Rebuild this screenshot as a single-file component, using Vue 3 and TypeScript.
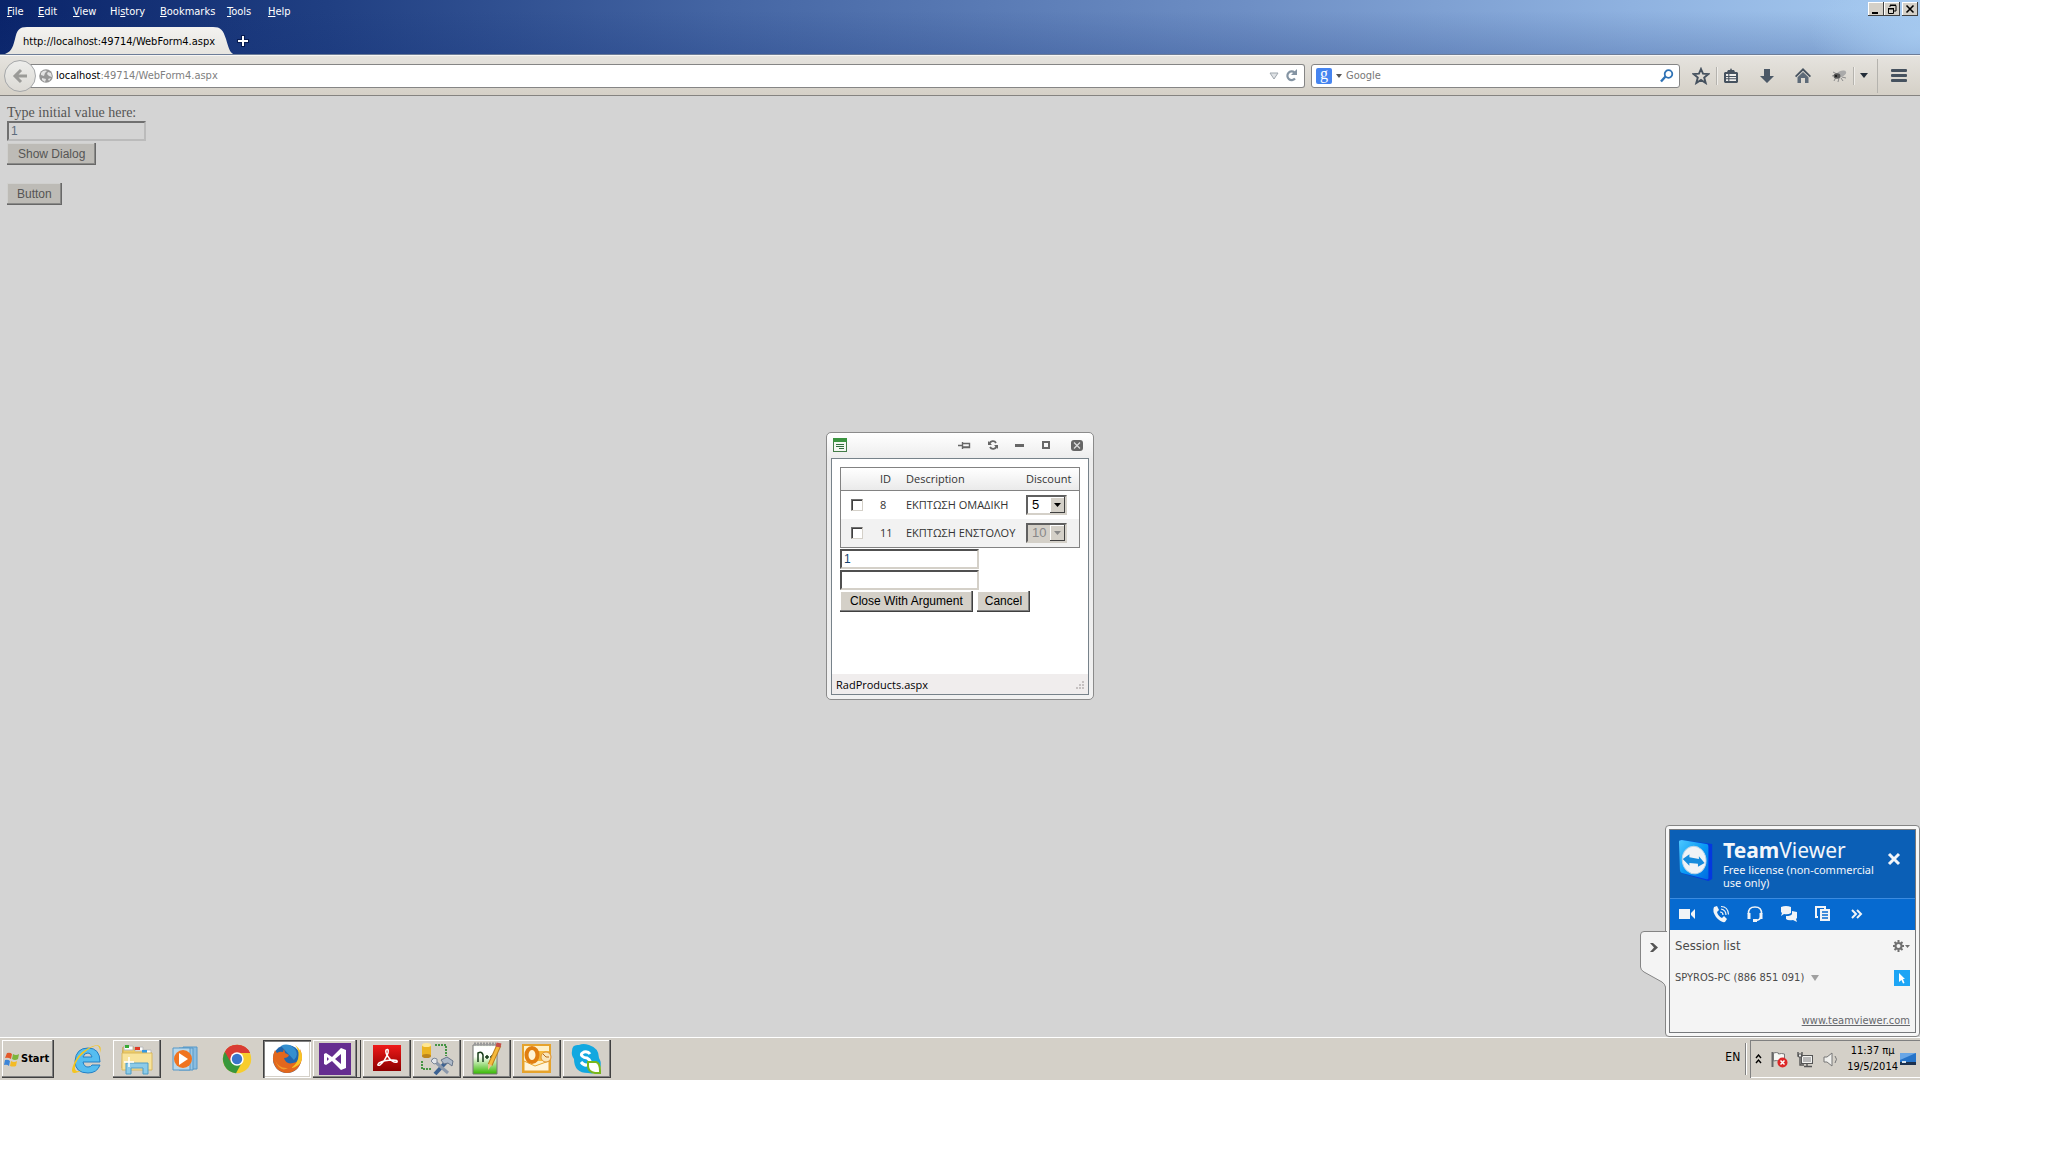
<script setup lang="ts">
import { ref } from 'vue'

interface Row { id: number; description: string; discount: string; disabled: boolean }

const menus = [
  { pre: '', key: 'F', post: 'ile', w: 31 },
  { pre: '', key: 'E', post: 'dit', w: 35 },
  { pre: '', key: 'V', post: 'iew', w: 37 },
  { pre: 'Hi', key: 's', post: 'tory', w: 50 },
  { pre: '', key: 'B', post: 'ookmarks', w: 67 },
  { pre: '', key: 'T', post: 'ools', w: 41 },
  { pre: '', key: 'H', post: 'elp', w: 30 },
]
const rows = ref<Row[]>([
  { id: 8, description: 'ΕΚΠΤΩΣΗ ΟΜΑΔΙΚΗ', discount: '5', disabled: false },
  { id: 11, description: 'ΕΚΠΤΩΣΗ ΕΝΣΤΟΛΟΥ', discount: '10', disabled: true },
])
const initialValue = ref('1')
const argument = ref('1')
const extra = ref('')
const query = ref('')
</script>

<template>
  <div class="desktop">
    <header class="titlebar">
      <div class="menu-line">
        <nav class="menus">
          <button v-for="m in menus" :key="m.post" type="button" :style="{ width: m.w + 'px' }">{{ m.pre }}<u>{{ m.key }}</u>{{ m.post }}</button>
        </nav>
        <div class="win-buttons">
          <button type="button" aria-label="Minimize"><svg width="14" height="12" viewBox="0 0 14 12"><rect x="3" y="9" width="6" height="2" /></svg></button>
          <button type="button" aria-label="Restore"><svg width="14" height="12" viewBox="0 0 14 12" fill="none" stroke="#000"><path d="M5 4V2.5h6V8H9M5 2h6M3.5 6v4.500h5V6zM3 5.500h6" /></svg></button>
          <button type="button" aria-label="Close" class="close"><svg width="14" height="12" viewBox="0 0 14 12" stroke="#000" stroke-width="1.600"><path d="M3.500 2.500l7 7M10.500 2.500l-7 7" /></svg></button>
        </div>
      </div>
      <div class="tab-line">
        <div class="tab">
          <svg width="236" height="28" viewBox="0 0 236 28" aria-hidden="true">
            <defs><linearGradient id="tabFill" x1="0" y1="0" x2="0" y2="1"><stop offset="0" stop-color="#f3f2f0" /><stop offset="1" stop-color="#e6e4df" /></linearGradient></defs>
            <path d="M0 28C12 27 13 19 15 12C17 3 19 0 27 0H213C221 0 223 3 226 12C229 22 230 27 236 28Z" fill="url(#tabFill)" />
          </svg>
          <span>http://localhost:49714/WebForm4.aspx</span>
        </div>
        <button type="button" class="new-tab" aria-label="New tab">
          <svg width="14" height="14" viewBox="0 0 14 14"><path d="M5 1h4v4h4v4H9v4H5V9H1V5h4z" fill="#061a50" /><path d="M6 2h2v4h4v2H8v4H6V8H2V6h4z" fill="#fff" /></svg>
        </button>
      </div>
    </header>

    <div class="toolbar">
      <div class="address">
        <button type="button" class="back" aria-label="Back">
          <svg width="16" height="16" viewBox="0 0 16 16" fill="none" stroke="#9b9b98" stroke-width="3"><path d="M15 8H4M9 2L3 8l6 6" /></svg>
        </button>
        <div class="url">
          <svg width="14" height="14" viewBox="0 0 14 14"><circle cx="7" cy="7" r="6.800" fill="#969696" /><path d="M2 4c2-3 5-3 6-2L6 4 5 7 2 6zM9 3l3 1 1 4-3-1-2-2zM3 9l4 1-1 3-3-2zM9 10l3-1-2 3z" fill="#e3e3e3" /></svg>
          <span class="url-text"><b>localhost</b>:49714/WebForm4.aspx</span>
          <svg width="10" height="8" viewBox="0 0 10 8"><path d="M1 1h8L5 7z" fill="#dfe2e5" stroke="#9fa7ae" /></svg>
          <button type="button" class="plain" aria-label="Reload">
            <svg width="13" height="13" viewBox="0 0 13 13"><path d="M10 9.500A4.300 4.300 0 1 1 9.500 3.500" fill="none" stroke="#8494a3" stroke-width="2.200" /><path d="M12 0v6H6z" fill="#8494a3" /></svg>
          </button>
        </div>
      </div>
      <div class="search">
        <span class="g-logo">g</span>
        <svg width="6" height="4" viewBox="0 0 6 4"><path d="M0 0h6L3 4z" fill="#555" /></svg>
        <input v-model="query" type="text" placeholder="Google" aria-label="Search" />
        <svg width="14" height="14" viewBox="0 0 14 14" fill="none" stroke="#2f72b5"><circle cx="8.500" cy="5" r="3.800" stroke-width="1.800" /><path d="M5.500 7.500L1 12.500" stroke-width="2.400" /></svg>
      </div>
      <div class="tools">
        <div class="tool-group">
          <button type="button" class="plain" aria-label="Bookmark"><svg width="18" height="18" viewBox="0 0 18 18"><path d="M9 2l2 4.700 5.500.3-4.300 3.500 1.500 5.500L9 13l-4.700 3 1.500-5.500L1.500 7l5.500-.3z" fill="none" stroke="#46525f" stroke-width="1.900" /></svg></button>
          <i class="sep" />
          <button type="button" class="plain" aria-label="Bookmarks list"><svg width="16" height="16" viewBox="0 0 16 16"><path d="M5 2h2l1-2 1 2h2l1 2h2l1 1v9l-1 1H2l-1-1V5l1-1h2z" fill="#46525f" /><path d="M3 6h10v7H3z" fill="#f0efec" /><path d="M3 8.500h10M3 10.800h10M5.800 6v7" stroke="#46525f" stroke-width="1.100" /></svg></button>
        </div>
        <button type="button" class="plain" aria-label="Downloads"><svg width="16" height="16" viewBox="0 0 16 16"><path d="M5 1h6v7h4l-7 7-7-7h4z" fill="#4c5967" /></svg></button>
        <button type="button" class="plain" aria-label="Home"><svg width="16" height="16" viewBox="0 0 16 16"><path d="M8 0l8 8-1.200 1.200L8 2.700 1.200 9.200 0 8z" fill="#46525f" /><path d="M8 4l5.500 5.200V15H10v-5H6v5H2.500V9.200z" fill="#5d6a78" /></svg></button>
        <div class="tool-group">
          <button type="button" class="plain" aria-label="Firebug"><svg width="16" height="14" viewBox="0 0 16 14"><path d="M1 7l4-1M2 3l4 2M3 12l2-4M7 13l1-4M12 12l-2-3M15 9l-4-1" stroke="#8b8b8b" /><ellipse cx="10" cy="5" rx="5.500" ry="3" transform="rotate(-25 10 5)" fill="#aaa" /><ellipse cx="6" cy="7" rx="3.400" ry="2.800" fill="#555" /><circle cx="5" cy="7" r="1" fill="#111" /></svg></button>
          <i class="sep" />
          <button type="button" class="plain" aria-label="More"><svg width="8" height="5" viewBox="0 0 8 5"><path d="M0 0h8L4 5z" fill="#222c38" /></svg></button>
        </div>
      </div>
      <div class="app-menu">
        <button type="button" class="plain" aria-label="Menu"><svg width="16" height="14" viewBox="0 0 16 14" fill="#46525f"><rect width="16" height="3" rx="1" /><rect y="5" width="16" height="3" rx="1" /><rect y="10" width="16" height="3" rx="1" /></svg></button>
      </div>
    </div>

    <main class="page">
      <form class="webform" @submit.prevent>
        <label for="initial">Type initial value here:</label>
        <input id="initial" v-model="initialValue" class="classic" type="text" />
        <button type="button" class="classic-btn first">Show Dialog</button>
        <button type="button" class="classic-btn second">Button</button>
      </form>

      <section class="dialog" role="dialog" aria-label="RadProducts.aspx">
        <div class="dialog-title">
          <svg class="app" width="14" height="14" viewBox="0 0 14 14"><rect x=".5" y=".5" width="13" height="13" fill="#f3f7f1" stroke="#447c48" /><rect width="14" height="4" fill="#3b9440" /><path d="M3 6.500h8M3 8.500h8M6 10.500h5" stroke="#326e3d" /></svg>
          <span class="grow" />
          <button type="button" class="plain" aria-label="Pin"><svg width="13" height="9" viewBox="0 0 13 9"><path d="M0 4.500h4M4.500 1v7M5 2.500h6.500v4H5M5 6h6" stroke="#666" stroke-width="1.400" fill="none" /></svg></button>
          <button type="button" class="plain" aria-label="Reload"><svg width="10" height="10" viewBox="0 0 10 10" fill="none" stroke="#666" stroke-width="1.800"><path d="M8 3A3.500 3.500 0 0 0 1.500 4M2 7a3.500 3.500 0 0 0 6.500-1" /><path d="M0 1v4h4zM10 9V5H6z" fill="#666" stroke="none" /></svg></button>
          <button type="button" class="plain" aria-label="Minimize"><svg width="10" height="10" viewBox="0 0 10 10"><rect y="4" width="9" height="3" fill="#666" /></svg></button>
          <button type="button" class="plain" aria-label="Maximize"><svg width="9" height="9" viewBox="0 0 9 9"><rect x="1" y="1" width="6" height="6" fill="none" stroke="#666" stroke-width="2" /></svg></button>
          <button type="button" class="plain close" aria-label="Close"><svg width="12" height="11" viewBox="0 0 12 11"><rect width="12" height="11" rx="3" fill="#666" /><path d="M3 2.500l6 6M9 2.500l-6 6" stroke="#ddd" stroke-width="1.200" /></svg></button>
        </div>
        <div class="dialog-body">
          <div class="dialog-content">
            <table>
              <colgroup><col class="c1" /><col class="c2" /><col class="c3" /><col /></colgroup>
              <thead><tr><th /><th>ID</th><th>Description</th><th>Discount</th></tr></thead>
              <tbody>
                <tr v-for="r in rows" :key="r.id">
                  <td><input type="checkbox" :aria-label="'Select ' + r.id" /></td>
                  <td>{{ r.id }}</td>
                  <td>{{ r.description }}</td>
                  <td>
                    <span class="drop" :class="{ off: r.disabled }">
                      <select v-model="r.discount" :disabled="r.disabled" :aria-label="'Discount ' + r.id"><option>5</option><option>10</option></select>
                      <span class="arrow"><svg width="7" height="4" viewBox="0 0 7 4"><path d="M0 0h7L3.500 4z" fill="currentColor" /></svg></span>
                    </span>
                  </td>
                </tr>
              </tbody>
            </table>
            <input v-model="argument" class="classic bright" type="text" aria-label="Argument" />
            <input v-model="extra" class="classic bright" type="text" aria-label="Value" />
            <div class="actions">
              <button type="button" class="classic-btn bright">Close With Argument</button>
              <button type="button" class="classic-btn bright narrow">Cancel</button>
            </div>
          </div>
          <div class="status">
            <span>RadProducts.aspx</span>
            <svg width="8" height="8" viewBox="0 0 8 8" fill="#c6c1c1"><path d="M6 0h2v2H6zM3 3h2v2H3zM6 3h2v2H6zM0 6h2v2H0zM3 6h2v2H3zM6 6h2v2H6z" /></svg>
          </div>
        </div>
      </section>

      <aside class="tv">
        <button type="button" class="handle" aria-label="Collapse">
          <svg width="27" height="56" viewBox="0 0 27 56"><path d="M27 .5H4Q.5.500.5 4V36Q.5 39 4 41L22 51Q25 53 25.500 56H27z" fill="#f4f4f4" /><path d="M27 .5H4Q.5.500.5 4V36Q.5 39 4 41L22 51Q25 53 25.500 56" fill="none" stroke="#858585" /><path d="M10 12l4 4.500-4 4.500h3l5-4.500-5-4.500z" fill="#555" /></svg>
        </button>
        <div class="tv-inner">
          <div class="tv-head">
            <svg class="tv-logo" width="40" height="46" viewBox="0 0 40 46">
              <defs><linearGradient id="tvFace" x1="0" y1="0" x2="1" y2="1"><stop offset="0" stop-color="#4dc8ff" /><stop offset=".5" stop-color="#0a9bf5" /><stop offset="1" stop-color="#006be0" /></linearGradient></defs>
              <path d="M2 1L36 5V42L32 44L4 36z" fill="#0438e0" /><path d="M1 3Q1 1 4 1L30 5Q32 5 32 8V41Q32 43 29 42L5 36Q2 35 2 32z" fill="url(#tvFace)" />
              <ellipse cx="17" cy="22" rx="12.500" ry="14.500" fill="#eff3f6" stroke="#b9d4e6" transform="rotate(-8 17 22)" />
              <path d="M5 21l7-5v3l10 2v-3l6 7-7 4v-3l-9-1v3z" fill="#168bdc" />
            </svg>
            <div class="tv-title"><p><b>Team</b>Viewer</p><small>Free license (non-commercial<br />use only)</small></div>
            <button type="button" class="plain" aria-label="Close"><svg width="14" height="14" viewBox="0 0 14 14" stroke="#f2f5f9" stroke-width="3"><path d="M2 2l10 10M12 2L2 12" /></svg></button>
          </div>
          <div class="tv-tools">
            <button type="button" class="plain" aria-label="Video"><svg width="18" height="16" viewBox="0 0 18 16" fill="#f1f4f7"><path d="M1 3h11v10H1zM13 7l4-4v10l-4-4z" /></svg></button>
            <button type="button" class="plain" aria-label="Call"><svg width="18" height="18" viewBox="0 0 18 18"><path d="M2 2l3-1 2 4-2 2q1 4 5 6l2-2 3 3-2 3Q9 18 4 12 0 6 2 2z" fill="#f1f4f7" /><path d="M8 7q3 0 3 3M9 4q5 1 5 6M9 1.500q7 0 7.500 8" fill="none" stroke="#f1f4f7" stroke-width="1.200" /></svg></button>
            <button type="button" class="plain" aria-label="Headset"><svg width="18" height="18" viewBox="0 0 18 18" fill="none" stroke="#f1f4f7"><path d="M2.500 9Q2 2 9 2t6.500 7M15 12q-1 3-5 3.500" stroke-width="1.600" /><path d="M3 8v6M15 8v6" stroke-width="3" /><path d="M7 15.500h4" stroke-width="3" /></svg></button>
            <button type="button" class="plain" aria-label="Chat"><svg width="18" height="18" viewBox="0 0 18 18" fill="#f1f4f7"><path d="M1 2q5-2 10 0v6q-3 2-7 1l-3 2 1-3-1-1z" /><path d="M12 6l5 1v6l-1 1 1 3-4-2q-5 1-7-1v-3q5 0 6-2z" /></svg></button>
            <button type="button" class="plain" aria-label="Files"><svg width="18" height="18" viewBox="0 0 18 18"><path d="M4 12H2V2h9v2" fill="none" stroke="#f1f4f7" stroke-width="2" /><path d="M6 4h10v12H6z" fill="#f1f4f7" /><path d="M8 7h6M8 10h6M8 13h6M3 5h2M3 8h2" stroke="#066ad0" stroke-width="1.300" /></svg></button>
            <button type="button" class="plain" aria-label="More"><svg width="18" height="12" viewBox="0 0 18 12" fill="none" stroke="#f1f4f7" stroke-width="2"><path d="M4 2l4 4-4 4M9 2l4 4-4 4" /></svg></button>
          </div>
          <div class="tv-body">
            <div class="tv-row head"><span>Session list</span><button type="button" class="plain" aria-label="Settings"><svg width="17" height="12" viewBox="0 0 17 12"><circle cx="5.500" cy="6" r="3" fill="none" stroke="#707070" stroke-width="2" /><path d="M5.500 0v2M5.500 10v2M0 6h2M9 6h2M1.500 2l1.500 1.500M8 8.500L9.500 10M9.500 2L8 3.500M3 8.500L1.500 10" stroke="#707070" stroke-width="2" /><path d="M12 5h5l-2.500 3z" fill="#707070" /></svg></button></div>
            <div class="tv-row"><span>SPYROS-PC (886 851 091)</span><svg width="8" height="6" viewBox="0 0 8 6"><path d="M0 0h8L4 6z" fill="#a0a0a0" /></svg><button type="button" class="pointer" aria-label="Remote control"><svg width="8" height="11" viewBox="0 0 8 11"><path d="M1 0l6 6H5l1.500 4L5 10.500 3.500 7 1 9z" fill="#fff" /></svg></button></div>
            <a href="#">www.teamviewer.com</a>
          </div>
        </div>
      </aside>
    </main>

    <footer class="taskbar">
      <button type="button" class="start">
        <svg width="16" height="15" viewBox="0 0 16 15"><path d="M3 1q3-1 5 1L7 7Q4 5 1 6z" fill="#e3592a" /><path d="M9 2q3 2 6 0l-1 5q-3 2-6 0z" fill="#7db53b" /><path d="M1 8q3-1 5 1l-1 5q-2-2-5-1z" fill="#3e86d8" /><path d="M7 9q3 2 6 0l-1 5q-3 1-6 0z" fill="#f4bb25" /></svg>
        Start
      </button>
      <div class="apps">
        <button type="button" class="app" aria-label="Internet Explorer"><svg width="32" height="32" viewBox="0 0 32 32"><path d="M29 19H12q1 5 5 5 3 0 4-2h8q-3 8-12 8Q4 30 4 18 5 5 17 5q12 0 12 14zM12 14h9q-1-4-4-4-4 0-5 4z" fill="#55bdf0" stroke="#227fc4" /><path d="M29 10q3-10-7-7Q10 7 4 18-2 31 4 30q3 0 7-3-6 3-7-1Q3 18 14 9 25 0 28 4q1 2 1 6z" fill="#f4c51f" /></svg></button>
        <button type="button" class="app raised" aria-label="Explorer"><svg width="34" height="32" viewBox="0 0 34 32"><path d="M3 4h11v3h9v2h8v16H2z" fill="#edcc67" stroke="#c69d42" /><path d="M4 3h9v4H4zM15 4h8v4h-8zM23 7h8v4h-8z" fill="#fff" stroke="#bbb" /><path d="M5 2h4v3H5z" fill="#37aa35" /><path d="M15 4h5v3h-5z" fill="#e23a26" /><path d="M22 7h5v3h-5z" fill="#3499e3" /><path d="M2 10h30v17H2z" fill="#f8e39b" stroke="#d9b85f" /><path d="M6 31V20h22v11h-5v-6H11v6z" fill="#8ccbe8" stroke="#4e9cc6" /><path d="M9 14v10M4 19h10" stroke="#fff" stroke-width="1.500" /></svg></button>
        <button type="button" class="app" aria-label="Media Player"><svg width="32" height="30" viewBox="0 0 32 30"><path d="M12 3h14v22H12z" fill="#8abce0" stroke="#5798c8" /><path d="M8 4h14v22H8z" fill="#9ac7e4" stroke="#5798c8" /><path d="M2 4h17v22H2z" fill="#b9d8eb" stroke="#5798c8" /><circle cx="12" cy="15" r="9" fill="#f07420" /><path d="M8 9v12l9-6z" fill="#fff" /></svg></button>
        <button type="button" class="app" aria-label="Chrome"><svg width="30" height="30" viewBox="0 0 30 30"><circle cx="15" cy="15" r="14.200" fill="#f7cd2d" /><path d="M15 15L2.700 8A14.200 14.200 0 0 1 28 9H15z" fill="#d93c34" /><path d="M15 15L2.700 8A14.200 14.200 0 0 0 14 29.200l6-11z" fill="#38973c" /><path d="M3 8l5 9 7-8h13Q24 1 15 1T3 8z" fill="#d93c34" /><circle cx="15" cy="15" r="6.700" fill="#fff" /><circle cx="15" cy="15" r="5.200" fill="#3a75cc" /></svg></button>
        <button type="button" class="app pressed" aria-label="Firefox"><svg width="32" height="32" viewBox="0 0 32 32"><circle cx="16" cy="16" r="14" fill="#2166ad" /><path d="M10 3q7-4 14 3 4 6-1 11" fill="#338fcf" /><path d="M29 6q5 11-3 20-10 8-20 0Q-1 17 4 7l2 3q3-2 6-1l1-3 1 4 4 2q-1 3-5 3 2 7 9 5 6-1 7-7z" fill="#e2671d" /><path d="M24 2q5 6 3 14-2 6-7 9 9-1 11-9 1-8-7-14z" fill="#f7c326" /><path d="M4 17q4 9 13 8-8 5-13-8z" fill="#f29b2c" /></svg></button>
        <button type="button" class="app raised stacked" aria-label="Visual Studio"><svg width="32" height="32" viewBox="0 0 32 32"><path fill="#652d90" d="M0 0h32v32H0z" /><path d="M5 11l2-1 6 4 9-9 5 2v18l-5 2-9-9-6 4-2-1zM8 14v4l2-2zM22 11l-6 5 6 5z" fill="#fff" fill-rule="evenodd" /></svg></button>
        <button type="button" class="app raised" aria-label="Acrobat"><svg width="30" height="32" viewBox="0 0 30 32"><defs><linearGradient id="pdf" x1="0" y1="0" x2="0" y2="1"><stop stop-color="#ef1a19" /><stop offset="1" stop-color="#8d0000" /></linearGradient></defs><path fill="url(#pdf)" d="M1 2h28v26H1z" /><path d="M14 7q3-2 2 3-3 8-8 12-4 1-1-2 5-3 14-3 5 0 4 2-4 1-8-4-4-5-3-8z" fill="none" stroke="#fff" stroke-width="1.500" /></svg></button>
        <button type="button" class="app raised" aria-label="SQL tools"><svg width="34" height="34" viewBox="0 0 34 34"><path d="M2 3h9v11H2z" fill="#ebb423" /><ellipse cx="6.500" cy="3" rx="4.500" ry="2" fill="#ffe793" /><ellipse cx="6.500" cy="14" rx="4.500" ry="2" fill="#bc851c" /><path d="M15 3h11v11M2 19v8h10" fill="none" stroke="#469445" stroke-width="2" stroke-dasharray="2 1" /><path d="M15 32l13-14" stroke="#3c6292" stroke-width="4" /><path d="M12 17l16 14" stroke="#8b98aa" stroke-width="3" /><path d="M21 18l6-3 6 4-1 5-4-3-4 1z" fill="#adb9c8" stroke="#667489" /><path d="M11 19l3-3 3 1v4l-3 1z" fill="#e1e5ea" stroke="#7e8998" /></svg></button>
        <button type="button" class="app raised" aria-label="Notepad++"><svg width="32" height="34" viewBox="0 0 32 34"><defs><linearGradient id="npp" x1="0" y1="0" x2="0" y2="1"><stop offset=".4" stop-color="#fbfff7" /><stop offset="1" stop-color="#35b800" /></linearGradient></defs><path fill="url(#npp)" stroke="#777" d="M2 3h24v29H2z" /><path d="M3 2h22" stroke="#999" stroke-width="3" stroke-dasharray="2 1" /><path d="M3 5h22v6H3z" fill="#fff" /><path d="M7 20v-9q4-2 5 2v7M14 15h4M16 13v4M19 15h4M21 13v4" fill="none" stroke="#163b18" stroke-width="1.500" /><path d="M28 3l-9 20" stroke="#bc7e1e" stroke-width="5" /><path d="M28 3l-9 20" stroke="#f5ba3c" stroke-width="3" /><path d="M28 1l-1 4" stroke="#c54e4b" stroke-width="5" /><path d="M17 22l4 1-4 5z" fill="#e7c18a" /></svg></button>
        <button type="button" class="app raised" aria-label="Outlook"><svg width="32" height="32" viewBox="0 0 32 32"><path d="M2 2h27v27H2z" fill="#fff0c6" stroke="#e6a32c" stroke-width="2" /><path d="M14 8h14v10H14z" fill="#f5b83c" /><path d="M3 18l11 5 14-5v10H3z" fill="#fff5db" stroke="#e6a32c" /><ellipse cx="11" cy="12" rx="5.500" ry="7" fill="#fff3d4" stroke="#e17e10" stroke-width="4" /><circle cx="25" cy="14" r="5" fill="#f9e5ba" stroke="#de912d" /><path d="M22 11l3 3h3" stroke="#b86d19" fill="none" /></svg></button>
        <button type="button" class="app raised" aria-label="Skype"><svg width="34" height="32" viewBox="0 0 34 32"><path d="M2 8Q2 1 9 2q4-2 10 0 10 3 10 13 3 5 1 10-3 7-12 5Q4 30 4 16 1 12 2 8z" fill="#12a8e0" /><path d="M20 11q-2-3-6-2-4 2-2 4 2 2 5 2 5 3 2 6-4 3-8-2" fill="none" stroke="#fff" stroke-width="3" /><path d="M18 19h8q4 1 4 9v2h-5q-7-1-7-7z" fill="#fff" stroke="#79b71c" stroke-width="2" /></svg></button>
      </div>
      <span class="grow" />
      <span class="lang">EN</span>
      <div class="tray">
        <svg width="7" height="10" viewBox="0 0 7 10" fill="none" stroke="#000" stroke-width="1.400"><path d="M1 4l2.500-3L6 4M1 9l2.500-3L6 9" /></svg>
        <svg width="17" height="17" viewBox="0 0 17 17"><path d="M1.500 1v15" stroke="#666" stroke-width="2" /><path d="M2.500 2q3-1 5 0v1q3-1 6 0v8q-3-1-6 0v-1q-2-1-5 0z" fill="#f7f7f4" stroke="#777" /><circle cx="11.500" cy="11.500" r="5" fill="#dd2727" /><path d="M9.500 9.500l4 4M13.500 9.500l-4 4" stroke="#fff" stroke-width="1.500" /></svg>
        <svg width="17" height="17" viewBox="0 0 17 17"><rect x="4.500" y="4.500" width="11" height="8" fill="#b9b9b9" stroke="#555" /><path d="M5.500 5.500h9v6h-9z" fill="none" stroke="#f3f3f0" /><path d="M7 15.500h8M10 13v2M1 1v4h4V1M3 5v9h4" stroke="#555" fill="none" stroke-width="1.400" /><path d="M1.500 3h3v3h-3z" fill="#eee" stroke="#555" /></svg>
        <svg width="15" height="15" viewBox="0 0 15 15"><path d="M1 5h3l5-4v13l-5-4H1z" fill="#f0f0ed" stroke="#777" /><path d="M12 4q3 3 0 7" stroke="#777" fill="none" /></svg>
        <time datetime="2014-05-19T11:37">11:37 πμ<br />19/5/2014</time>
        <button type="button" class="plain" aria-label="Show desktop"><svg width="16" height="12" viewBox="0 0 16 12"><path d="M0 0h16v10H0z" fill="#2673c8" /><path d="M0 0h16L0 7z" fill="#69a6e6" /><path d="M0 9h16v3H0z" fill="#1b314f" /><path d="M2 8h4v2H2z" fill="#d5e2ed" /></svg></button>
      </div>
    </footer>
  </div>
</template>

<style>
body { margin: 0; background: #fff; }
</style>

<style scoped>
.desktop {
  --ui: "DejaVu Sans Condensed", "DejaVu Sans", sans-serif;
  display: flex; flex-direction: column;
  margin-right: 128px; min-height: calc(100vh - 80px);
  font: 11px/14px var(--ui); color: #000;
}
* { box-sizing: border-box; }
svg { display: block; flex: none; }
button { font: inherit; color: inherit; padding: 0; border: 0; background: none; flex: none; }
.plain { display: block; }
.grow { flex: 1; }

.titlebar {
  height: 55px; border-bottom: 1px solid #6d7d98; overflow: hidden;
  background:
    radial-gradient(ellipse 110px 60px at 100% 60%, rgba(166, 202, 240, .9), transparent),
    linear-gradient(to bottom, transparent 20%, rgba(20, 50, 120, .22)),
    linear-gradient(to right, #0a246a, #203f82 17%, #4566a4 38%, #6e8fc5 65%, #8fb2e0 85%, #a6caf0);
}
.menu-line { display: flex; justify-content: space-between; height: 27px; padding: 0 2px 0 7px; }
.menus { display: flex; height: 24px; align-items: center; color: #fff; }
.menus button { text-align: left; white-space: nowrap; }
.win-buttons { display: flex; padding-top: 2px; height: 16px; }
.win-buttons button { width: 16px; height: 14px; padding: 1px; background: #d4d0c8; box-shadow: inset -1px -1px #404040, inset 1px 1px #fff; }
.win-buttons .close { margin-left: 2px; }
.tab-line { display: flex; align-items: center; height: 28px; }
.tab { display: grid; align-items: center; }
.tab > * { grid-area: 1 / 1; }
.tab span { padding: 2px 0 0 23px; }

.toolbar { display: flex; align-items: center; height: 41px; border-top: 1px solid #f7f6f4; border-bottom: 1px solid #858380; background: linear-gradient(#e5e3de, #d5d0c7); padding: 0 13px 0 4px; }
.address { display: flex; flex: 1; align-items: center; }
.back { display: grid; place-items: center; width: 32px; height: 32px; border: 1px solid #a5a7a9; border-radius: 50%; background: linear-gradient(#ededeb, #dcdad5); margin-right: -6px; z-index: 1; }
.url { display: flex; flex: 1; align-items: center; gap: 6px; height: 24px; border: 1px solid #858585; border-left: 0; border-radius: 0 3px 3px 0; background: #fff; padding: 0 6px 0 9px; }
.url-text { flex: 1; color: #808080; margin-left: -3px; padding-top: 1px; }
.url-text b { font-weight: 400; color: #000; }
.search { display: flex; align-items: center; width: 369px; height: 24px; margin-left: 6px; border: 1px solid #858585; border-radius: 3px; background: #fff; padding: 0 5px 0 4px; gap: 4px; }
.g-logo { width: 16px; height: 16px; background: #4584f0; border-radius: 2px; color: #fff; font: 16px/12px "Liberation Serif", serif; text-align: center; }
.search input { flex: 1; min-width: 0; border: 0; outline: 0; padding: 1px 0 0; font: inherit; background: none; }
.search input::placeholder { color: #777; opacity: 1; }
.tools { display: flex; align-items: center; gap: 20px; margin-left: 12px; }
.tool-group { display: flex; align-items: center; gap: 6px; }
.sep { width: 1px; height: 18px; background: #b5b3ae; box-shadow: 1px 0 #efede9; }
.app-menu { display: flex; align-items: center; height: 34px; margin-left: 9px; padding-left: 13px; border-left: 1px solid #b5b3ae; }

.page { position: relative; flex: 1; display: grid; background: #d4d4d4; }
.page > * { grid-area: 1 / 1; }
.webform { display: flex; flex-direction: column; align-items: flex-start; padding: 9px 7px; font: 14px/16px "Liberation Serif", serif; color: #555; }
.classic { width: 139px; height: 20px; margin: 0; padding: 0 2px; border: 2px solid; border-color: #707070 #bbb #bbb #707070; background: #d4d4d4; color: #5c6c7c; font: 12px "Liberation Sans", sans-serif; outline: 0; }
.classic.bright { margin-bottom: 1px; border-color: #505050 #d4d0c8 #d4d0c8 #505050; background: #fff; color: #15436e; }
.classic-btn { height: 22px; padding: 0 10px; background: #bdbbb6; color: #555; font: 12px "Liberation Sans", sans-serif; box-shadow: inset -1px -1px #686868, inset -2px -2px #8a8a88, inset 1px 1px #d0d0ce; }
.classic-btn.first { margin-top: 2px; padding: 0 11px; }
.classic-btn.second { margin-top: 18px; }
.classic-btn.bright { height: 21px; background: #d4d0c8; color: #000; box-shadow: inset -1px -1px #404040, inset -2px -2px #808080, inset 1px 1px #fff; }
.classic-btn.narrow { padding: 0 8px; }

.dialog { place-self: center; display: flex; flex-direction: column; width: 268px; height: 268px; margin-bottom: 2px; border: 1px solid #8b8b8b; border-radius: 5px; padding: 0 4px 4px; background: linear-gradient(#fff, #ececec 26px, #f1f1f1); font: 11px/14px "Open Sans", "Noto Sans", sans-serif; color: #333; }
.dialog-title { display: flex; align-items: center; gap: 17px; height: 25px; padding: 0 6px 0 2px; }
.dialog-title .close { margin-left: 3px; }
.dialog-body { display: flex; flex: 1; flex-direction: column; border: 1px solid #77828a; background: #fff; }
.dialog-content { flex: 1; padding: 8px; display: flex; flex-direction: column; align-items: flex-start; }
table { width: 240px; border: 1px solid #828282; border-spacing: 0; table-layout: fixed; margin-bottom: 1px; }
.c1 { width: 32px; } .c2 { width: 26px; } .c3 { width: 120px; }
th, td { padding: 0 0 0 7px; text-align: left; font-weight: 400; white-space: nowrap; }
th { height: 23px; border-bottom: 1px solid #828282; background: linear-gradient(#fff, #eaeaea); }
td { height: 28px; }
tbody tr:nth-child(2) td { background: #f2f2f2; }
td:first-child { padding-left: 10px; }
input[type="checkbox"] { appearance: none; display: block; width: 12px; height: 12px; margin: 0; background: #fff; border: 1px solid; border-color: #707070 #d4d0c8 #d4d0c8 #707070; box-shadow: inset 1px 1px #404040; }
.drop { display: flex; width: 41px; height: 20px; border: 2px solid; border-color: #606060 #d4d0c8 #d4d0c8 #606060; background: #fff; }
.drop select { appearance: none; width: 22px; border: 0; padding: 0 0 0 4px; background: none; color: #000; font: 13px/16px "Liberation Sans", sans-serif; outline: 0; opacity: 1; }
.arrow { display: grid; place-items: center; width: 15px; background: #d4d0c8; box-shadow: inset -1px -1px #404040, inset 1px 1px #fff; color: #000; pointer-events: none; }
.drop.off { background: #d4d0c8; }
.drop.off select, .drop.off .arrow { color: #888; }
.actions { display: flex; gap: 4px; }
.status { display: flex; align-items: center; justify-content: space-between; height: 20px; padding: 2px 4px 0; background: #f0eded; color: #000; }

.tv { position: absolute; right: 0; bottom: 0; width: 255px; height: 212px; padding: 3px; border: 1px solid #858585; border-radius: 4px; background: #f7f7f7; }
.handle { position: absolute; right: 252px; top: 105px; }
.tv-inner { display: flex; flex-direction: column; height: 100%; border: 1px solid #77797c; background: #f4f4f4; }
.tv-head { display: flex; gap: 7px; height: 68px; padding: 8px 14px 0 8px; background: #0b5fb6; color: #f3f6fa; }
.tv-title { flex: 1; font-family: "Noto Sans", sans-serif; white-space: nowrap; }
.tv-title p { margin: 0; font-size: 21px; line-height: 25px; }
.tv-title small { display: block; font-size: 11px; line-height: 13px; }
.tv-logo { width: 38px; }
.tv-head .plain { align-self: flex-start; margin-top: 14px; }
.tv-tools { display: flex; align-items: center; gap: 16px; height: 32px; padding: 0 8px 2px; background: #066ad0; border-top: 1px solid #3b8be0; }
.tv-body { flex: 1; display: flex; flex-direction: column; padding: 0 5px 2px; color: #4a4a4a; }
.tv-row { display: flex; align-items: center; gap: 7px; height: 32px; }
.tv-row.head { justify-content: space-between; font-size: 13px; }
.pointer { display: grid; place-items: center; width: 16px; height: 16px; margin-left: auto; background: #1da5f5; }
.tv-body a { align-self: flex-end; margin-top: auto; color: #66686c; padding-bottom: 2px; }

.taskbar { display: flex; align-items: center; height: 43px; background: #d4d0c8; box-shadow: inset 0 1px #fff; padding: 3px 0 2px 2px; }
.start { display: flex; align-items: center; gap: 1px; width: 52px; height: 38px; padding-left: 2px; font-weight: 700; box-shadow: inset -1px -1px #404040, inset -2px -2px #808080, inset 1px 1px #fff; }
.apps { display: flex; gap: 2px; margin-left: 9px; }
.apps .app { display: grid; place-items: center; width: 48px; height: 38px; }
.raised { box-shadow: inset -1px -1px #404040, inset -2px -2px #808080, inset 1px 1px #fff; }
.pressed { background: #fff; box-shadow: inset 1px 1px #404040, inset 2px 2px #808080, inset -1px -1px #fff, inset -2px -2px #d4d0c8; }
.apps .stacked { padding-right: 4px; box-shadow: inset -1px -1px #404040, inset -4px 0 #d4d0c8, inset -5px 0 #404040, inset -6px -2px #808080, inset 1px 1px #fff; }
.lang { padding-right: 5px; height: 32px; font-size: 12px; line-height: 28px; border-right: 1px solid #808080; box-shadow: 1px 0 #fff; }
.tray { display: flex; align-items: center; gap: 9px; height: 38px; margin-left: 4px; padding: 0 4px 0 5px; box-shadow: inset 1px 1px #808080, inset 0 -1px #fff; }
.tray time { line-height: 16px; text-align: center; margin-right: -7px; }
</style>
